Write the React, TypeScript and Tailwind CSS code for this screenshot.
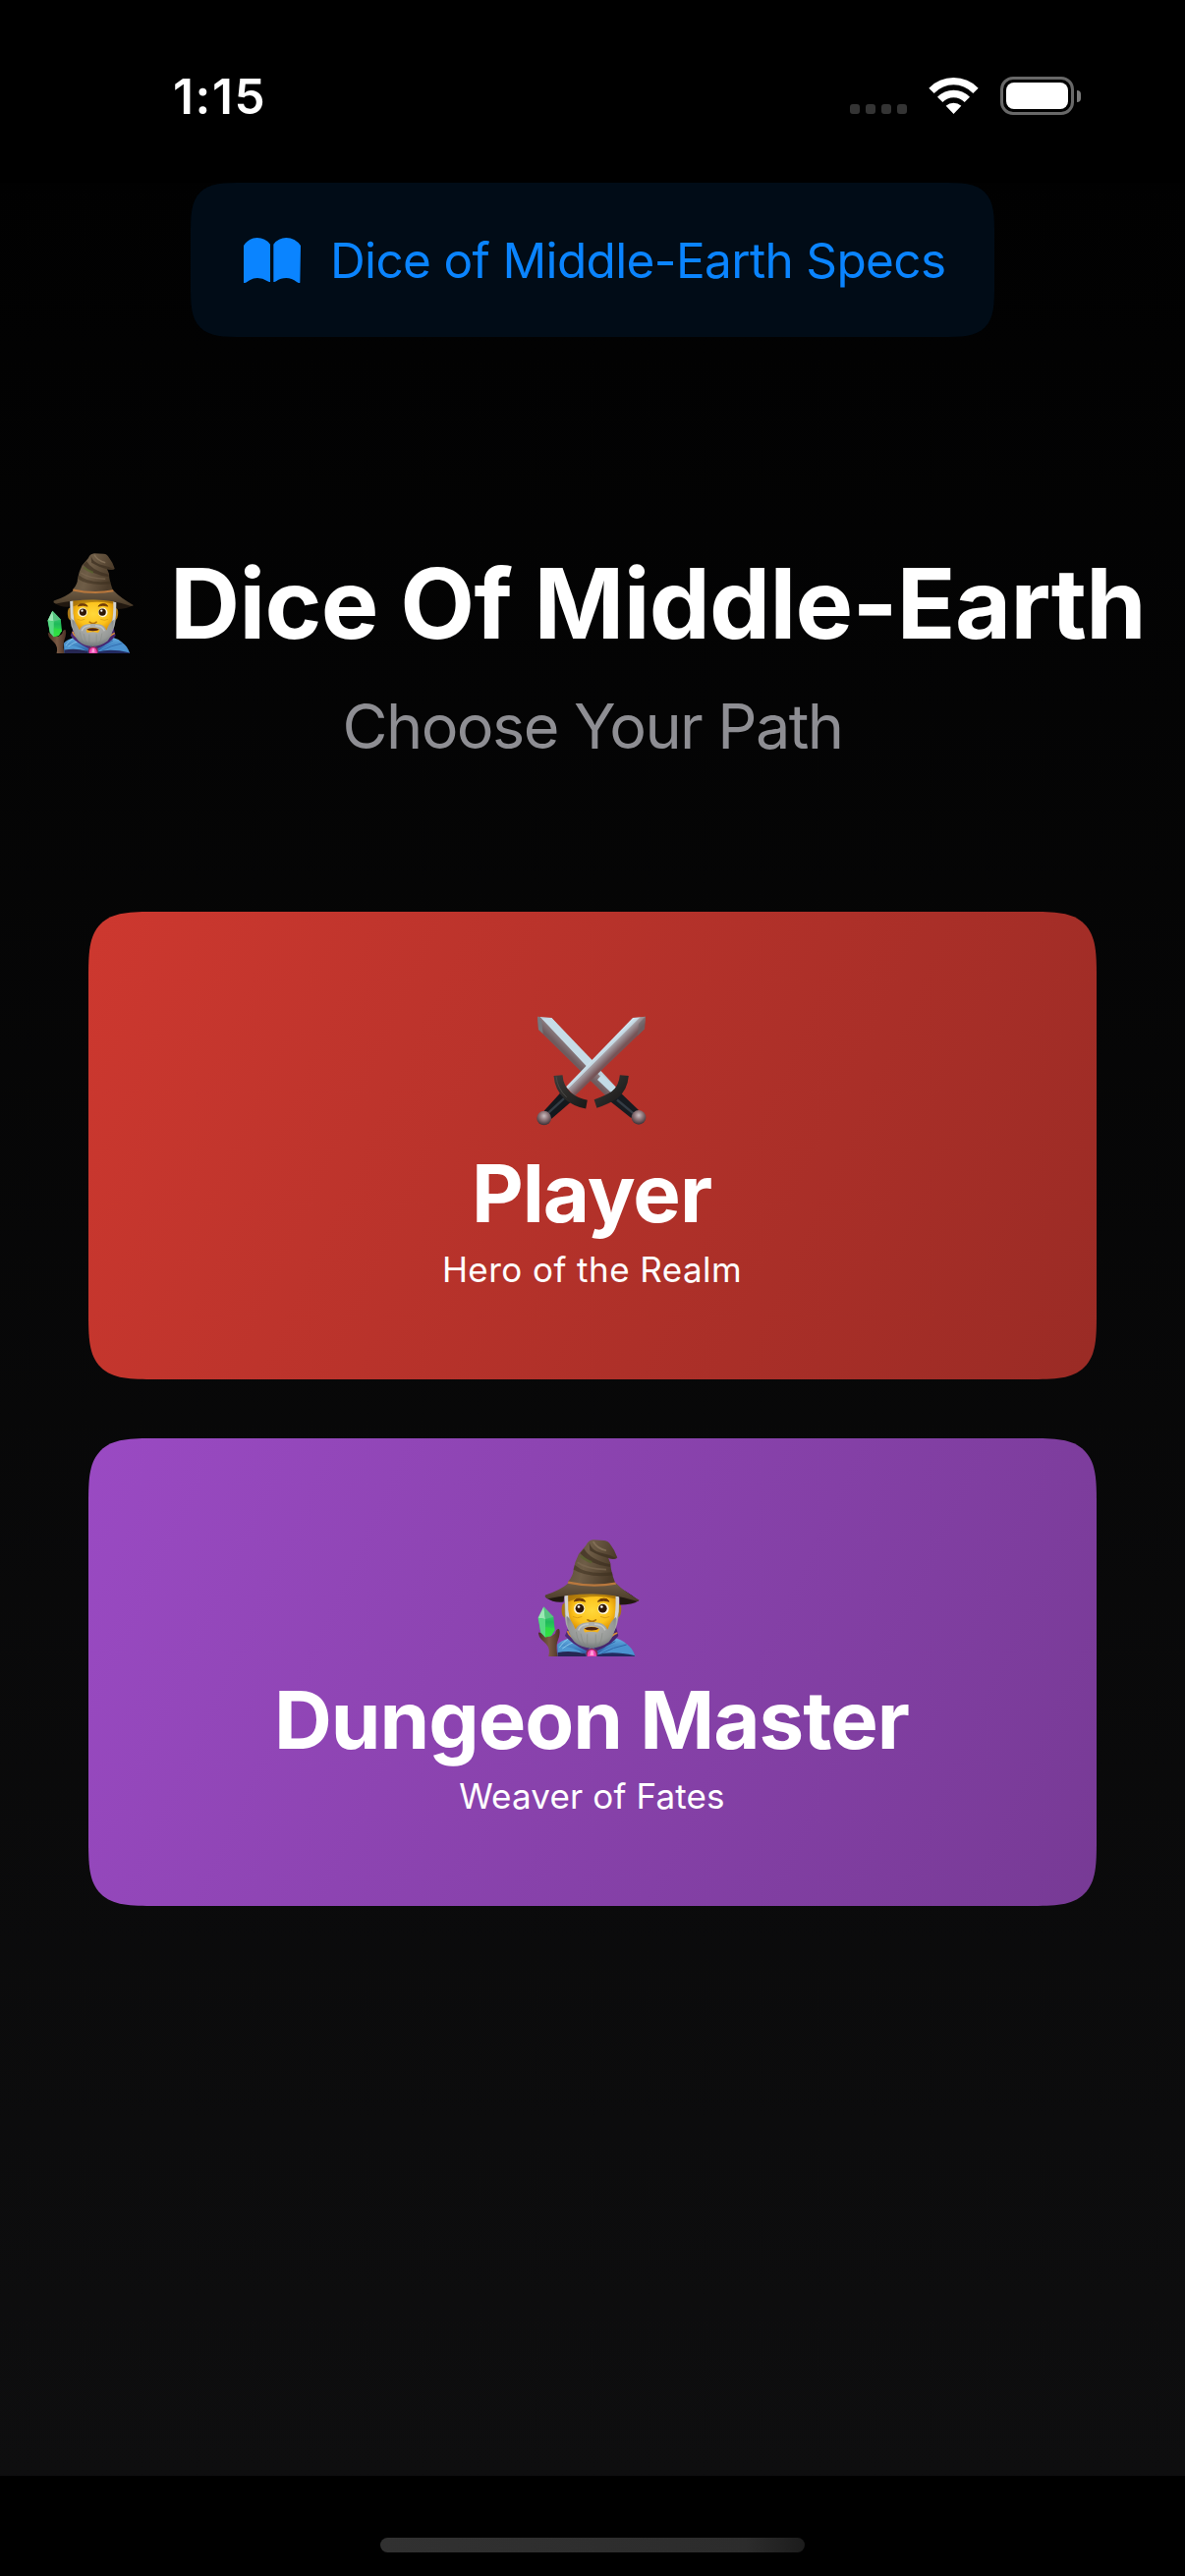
import React, { useId } from "react";

function Wizard({ className }: { className: string }) {
  const id = useId().replace(/[^a-zA-Z0-9]/g, "");
  const u = (n: string) => `url(#${id}${n})`;
  return (
    <svg className={className} viewBox="80 50 312 358" preserveAspectRatio="none" aria-hidden="true">
      <defs>
        <linearGradient id={`${id}hat`} x1="0" y1="0" x2="1" y2="0.3">
          <stop offset="0" stopColor="#5b4c37" />
          <stop offset="0.45" stopColor="#6f5d47" />
          <stop offset="1" stopColor="#4b3b29" />
        </linearGradient>
        <linearGradient id={`${id}brim`} x1="0" y1="0" x2="0" y2="1">
          <stop offset="0" stopColor="#6d5b44" />
          <stop offset="1" stopColor="#493a28" />
        </linearGradient>
        <radialGradient id={`${id}face`} cx="0.5" cy="0.45" r="0.6">
          <stop offset="0" stopColor="#ffd83a" />
          <stop offset="0.65" stopColor="#fcc21b" />
          <stop offset="1" stopColor="#d98f06" />
        </radialGradient>
        <radialGradient id={`${id}beard`} cx="0.5" cy="0.35" r="0.65">
          <stop offset="0" stopColor="#b4b5b3" />
          <stop offset="0.7" stopColor="#969997" />
          <stop offset="1" stopColor="#6f7679" />
        </radialGradient>
        <linearGradient id={`${id}cape`} x1="0" y1="0" x2="0" y2="1">
          <stop offset="0" stopColor="#69b3e6" />
          <stop offset="0.6" stopColor="#3c7dbd" />
          <stop offset="1" stopColor="#24458f" />
        </linearGradient>
        <linearGradient id={`${id}stick`} x1="0" y1="0" x2="1" y2="0">
          <stop offset="0" stopColor="#4a3023" />
          <stop offset="0.5" stopColor="#7a5a44" />
          <stop offset="1" stopColor="#4b3125" />
        </linearGradient>
        <linearGradient id={`${id}gem`} x1="0" y1="0" x2="0" y2="1">
          <stop offset="0" stopColor="#5fe08a" />
          <stop offset="0.5" stopColor="#1fb95a" />
          <stop offset="1" stopColor="#3dea4c" />
        </linearGradient>
      </defs>
      {/* robe */}
      <path d="M142 408 L140 372 Q150 360 176 352 L245 385 L314 350 Q360 362 378 408Z" fill={u("cape")} />
      <path d="M142 376 Q185 376 222 400 L228 408 L142 408Z" fill="#4f98d2" />
      <path d="M142 396 Q180 388 226 400 L228 408 L142 408Z" fill="#262753" />
      <path d="M350 370 Q300 375 264 400 L262 408 L378 408 Q370 380 350 370Z" fill="#4b92d0" />
      <path d="M264 402 Q310 390 376 405 L377 408 L262 408Z" fill="#232a60" />
      <path d="M318 362 Q290 372 266 394 M352 372 Q310 380 276 398" fill="none" stroke="#2e65a8" strokeWidth="3" />
      <path d="M176 352 Q160 362 147 380 M196 364 Q180 366 156 384" fill="none" stroke="#8cc8ec" strokeWidth="3" />
      {/* collar */}
      <path d="M175 318 L164 345 Q186 372 232 392 L245 372Z" fill="#4c2a78" />
      <path d="M320 318 L327 345 Q308 372 260 392 L245 372Z" fill="#452570" />
      <path d="M172 330 Q174 342 190 352" fill="none" stroke="#dc8f35" strokeWidth="5" />
      <path d="M324 336 Q316 338 306 347" fill="none" stroke="#dc8f35" strokeWidth="5" />
      {/* hair, ears, face */}
      <path d="M157 248 Q151 262 156 282 Q160 292 170 290 V240Z M333 248 Q339 262 333 282 Q329 292 320 290 V240Z" fill="#a87614" />
      <path d="M162 215 H330 L327 290 Q322 330 300 350 H195 Q166 328 164 290Z" fill="#a6a9a8" />
      <path d="M163 218 L172 216 L177 300 Q170 290 166 280Z M330 220 L318 218 L315 300 Q324 292 328 270Z" fill="#d3d5d3" />
      <path d="M174 216 H318 Q321 270 312 300 L292 330 H200 Q178 305 174 265Z" fill={u("face")} />
      <path d="M174 216 H318 V231 Q245 215 174 240Z" fill="#8e6008" opacity="0.6" />
      {/* eyes and brows */}
      <circle cx="208" cy="262" r="17" fill="#fff7d8" />
      <circle cx="281" cy="262" r="17" fill="#fff7d8" />
      <circle cx="209" cy="261" r="13" fill="#2e1606" />
      <circle cx="279" cy="261" r="13" fill="#2e1606" />
      <circle cx="206" cy="256" r="4" fill="#fff" />
      <circle cx="276" cy="256" r="4" fill="#fff" />
      <path d="M191 239 Q198 229 209 231 Q222 230 226 240 Q210 234 191 239Z M264 240 Q270 230 283 231 Q294 230 299 240 Q282 234 264 240Z" fill="#6d3a08" stroke="#6d3a08" strokeWidth="3" />
      <path d="M188 286 Q202 294 216 286 M272 286 Q288 294 300 286" fill="none" stroke="#dea013" strokeWidth="3" />
      <path d="M233 296 Q246 306 258 296" fill="none" stroke="#b3730b" strokeWidth="5" strokeLinecap="round" />
      {/* beard */}
      <path d="M170 285 Q184 296 196 326 Q204 306 228 304 Q246 301 264 304 Q286 306 294 326 Q304 298 320 288 Q320 340 298 364 Q274 382 245 383 Q212 382 193 364 Q170 340 170 285Z" fill={u("beard")} />
      <path d="M221 326 Q226 316 245 316 Q264 316 270 326 L264 334 Q245 330 224 334Z" fill="#f3b31b" />
      <path d="M223 322 Q244 313 267 322 Q263 328 245 328 Q228 328 223 322Z" fill="#4b2214" />
      <path d="M205 328 Q210 310 236 309 M287 328 Q280 310 254 309" fill="none" stroke="#c4c6c2" strokeWidth="5" />
      <path d="M212 338 Q214 362 228 378 M232 340 V380 M258 340 V380 M278 336 Q276 364 264 378 M198 332 Q200 352 210 368" fill="none" stroke="#80877f" strokeWidth="2" opacity="0.8" />
      {/* brooch */}
      <ellipse cx="246" cy="399" rx="18" ry="16" fill="#8b2750" />
      <path d="M232 408 Q231 388 246 387 Q260 388 260 408Z" fill="#ef45b0" />
      <path d="M240 405 L243 391 L250 391 L252 405Z" fill="#ff9ad8" />
      {/* hat */}
      <path d="M107 229 Q130 245 160 241 L162 218 Q245 196 330 226 L331 250 Q370 250 389 237 Q350 205 310 190 H176 Q140 210 107 229Z" fill="#211810" />
      <path d="M104 220 Q150 205 175 183 Q250 200 320 184 Q345 210 391 236 Q388 242 372 236 Q320 218 250 217 Q180 216 112 231 Q100 228 104 220Z" fill={u("brim")} />
      <path d="M174 178 Q190 160 190 140 Q194 118 206 94 L228 68 Q236 52 250 51 L284 53 Q296 54 303 66 Q316 82 324 106 Q312 114 296 106 L303 123 Q304 150 318 184 Q250 202 174 184Z" fill={u("hat")} />
      <path d="M238 60 Q246 84 270 90 Q300 96 322 108 Q306 112 292 106 Q268 100 240 84Z" fill="#3d3022" opacity="0.75" />
      <path d="M222 78 Q240 112 302 126 L302 134 Q240 128 210 92Z" fill="#3b2d1e" opacity="0.65" />
      <path d="M194 128 Q230 160 308 150 L310 160 Q230 168 190 142Z" fill="#3b2d1e" opacity="0.55" />
      <path d="M250 56 Q262 78 290 84" fill="none" stroke="#8a765d" strokeWidth="5" opacity="0.8" />
      <path d="M212 100 Q224 112 246 120" fill="none" stroke="#56642b" strokeWidth="8" opacity="0.7" />
      <path d="M202 120 Q228 140 290 142" fill="none" stroke="#7e6a52" strokeWidth="5" opacity="0.7" />
      <path d="M174 178 Q246 194 318 181 L320 188 Q246 201 172 185Z" fill="#b9783d" />
      {/* staff and crystal */}
      <path d="M83 338 Q82 332 90 336 L104 348 H120 L134 338 Q137 322 146 324 Q150 332 146 348 L140 366 Q136 384 142 408 H114 Q120 384 106 370 L92 356 Q84 348 83 338Z" fill={u("stick")} />
      <path d="M99 256 L129 287 L133 328 L122 345 L104 349 L90 334 L82 290Z" fill={u("gem")} />
      <path d="M99 256 L82 290 L104 294Z" fill="#9be8b4" />
      <path d="M99 256 L104 294 L129 287Z" fill="#57c481" />
      <path d="M82 290 L104 294 L104 349 L90 334Z" fill="#56d983" />
      <path d="M104 318 L133 322 L122 345 L104 349Z" fill="#2fe03f" opacity="0.7" />
    </svg>
  );
}

function Swords({ className }: { className: string }) {
  return (
    <svg className={className} viewBox="78 72 336 338" preserveAspectRatio="none" aria-hidden="true">
      <defs>
        <linearGradient id="bladeBack" gradientUnits="userSpaceOnUse" x1="215" y1="165" x2="180" y2="200">
          <stop offset="0" stopColor="#c4d6df" />
          <stop offset="0.5" stopColor="#b5cbd6" />
          <stop offset="0.52" stopColor="#8b7c80" />
          <stop offset="1" stopColor="#6f5a5d" />
        </linearGradient>
        <linearGradient id="bladeFront" gradientUnits="userSpaceOnUse" x1="256" y1="175" x2="294" y2="213">
          <stop offset="0" stopColor="#b9cfda" />
          <stop offset="0.25" stopColor="#d3e8f3" />
          <stop offset="0.5" stopColor="#c2d5df" />
          <stop offset="0.54" stopColor="#a5a0a6" />
          <stop offset="1" stopColor="#765457" />
        </linearGradient>
        <linearGradient id="guard" x1="0" y1="0" x2="1" y2="1">
          <stop offset="0" stopColor="#3a3937" />
          <stop offset="1" stopColor="#1b1a19" />
        </linearGradient>
        <radialGradient id="pommel" cx="0.5" cy="0.35" r="0.6">
          <stop offset="0" stopColor="#c8bcbf" />
          <stop offset="0.5" stopColor="#8d7478" />
          <stop offset="1" stopColor="#45383d" />
        </radialGradient>
      </defs>
      <path d="M81 74 L124 78 L322 292 L294 322 L84 114Z" fill="url(#bladeBack)" />
      <path d="M81 74 L84 114 L98 127 L94 90Z" fill="#76797f" />
      <path d="M94 80 L124 78 L250 210 L232 228Z" fill="#c6dce7" />
      <path d="M277 252 L320 292 L306 308 L264 268Z" fill="#c3dbe6" />
      <path d="M336 310 L390 362 L367 386 L304 335Z" fill="#171b20" />
      <path d="M324 330 L374 372" stroke="#343c44" strokeWidth="7" />
      <path d="M346 255 Q343 294 316 315 Q292 331 258 342" fill="none" stroke="url(#guard)" strokeWidth="27" />
      <circle cx="390" cy="384" r="22" fill="url(#pommel)" />
      <path d="M411 74 L372 78 L168 290 L194 319 L408 112Z" fill="url(#bladeFront)" />
      <path d="M411 74 L408 112 L386 134 L390 96Z" fill="#6b6468" opacity="0.6" />
      <path d="M188 332 L124 388 L101 364 L150 310Z" fill="#14181d" />
      <path d="M162 326 L112 372" stroke="#343c44" strokeWidth="7" />
      <path d="M144 255 Q147 294 174 318 Q198 338 231 344" fill="none" stroke="url(#guard)" strokeWidth="27" />
      <path d="M138 258 Q142 296 170 322" fill="none" stroke="#4a4947" strokeWidth="3" />
      <circle cx="101" cy="386" r="22" fill="url(#pommel)" />
    </svg>
  );
}

function StatusBar() {
  return (
    <header className="flex h-[186px] items-start justify-between bg-black pr-[106px] pl-[176px] pt-[68px] text-white">
      <time className="text-[49.5px] leading-[60px] font-semibold tracking-[1.6px]">1:15</time>
      <div className="flex items-start pt-[10px]">
        <div className="mt-[28px] flex gap-[6px]">
          <i className="size-[10px] rounded-[3px] bg-[#343434]" />
          <i className="size-[10px] rounded-[3px] bg-[#343434]" />
          <i className="size-[10px] rounded-[3px] bg-[#343434]" />
          <i className="size-[10px] rounded-[3px] bg-[#343434]" />
        </div>
        <svg className="mt-[1px] ml-[22px] h-[37px] w-[51px]" viewBox="315 57 153 111" fill="#fff" aria-hidden="true">
          <path d="M316 89 Q347 57 391.500 57 Q436 57 467 89 L451 105 Q425 79 391.500 79 Q358 79 332 105Z" />
          <path d="M342 116 Q363 95 391.500 95 Q420 95 441 116 L425 132 Q411 118 391.500 118 Q372 118 358 132Z" />
          <path d="M368 143 Q378 134 391.500 134 Q405 134 415 143 L391.500 168Z" />
        </svg>
        <div className="ml-[22px] flex items-center">
          <div className="h-[39px] w-[75px] rounded-[13px] border-[3px] border-[#686868] p-[3px]">
            <div className="h-full w-full rounded-[8px] bg-white" />
          </div>
          <div className="ml-[3px] h-[12px] w-[4px] rounded-r-full bg-[#7a7a7a]" />
        </div>
      </div>
    </header>
  );
}

type RoleCardProps = {
  art: React.ReactNode;
  title: string;
  subtitle: string;
  gradient: string;
  subtitleTracking: string;
};

function RoleCard({ art, title, subtitle, gradient, subtitleTracking }: RoleCardProps) {
  return (
    <button
      className={`flex h-[476px] w-[1026px] flex-col items-center rounded-[69px] pt-[98px] text-white [corner-shape:superellipse(1.8)] ${gradient}`}
    >
      <div className="flex h-[130px] w-full justify-center">{art}</div>
      <h2 className="mt-[11px] mr-[2px] text-[81.5px] leading-[96px] font-bold tracking-[-1px]">{title}</h2>
      <p className={`mt-[8px] mr-[1px] text-[35px] leading-[42px] ${subtitleTracking}`}>{subtitle}</p>
    </button>
  );
}

export default function App() {
  return (
    <div className="flex h-[2622px] w-[1206px] flex-col overflow-hidden bg-black font-['Inter',sans-serif]">
      <StatusBar />
      <main className="flex h-[2334px] flex-col items-center bg-[linear-gradient(to_bottom,#000_-186px,#0e0e0f_100%)]">
        <button className="flex h-[157px] w-[818px] items-center rounded-[54px] bg-[#010c17] pl-[54px] text-[#0a84ff] [corner-shape:superellipse(1.8)]">
          <svg className="h-[46px] w-[58px] shrink-0" viewBox="204 216 174 138" fill="#0a84ff" aria-hidden="true">
            <path d="M204 240 Q220 216 245 216 Q270 216 285 236 V351 Q281 352 277 349 Q262 339 246 339 Q229 339 214 351 Q208 355 204 353Z" />
            <path d="M378 240 Q361 216 334 216 Q310 216 295 236 V351 Q299 352 303 349 Q317 339 334 339 Q351 339 366 351 Q372 355 376 353Z" />
          </svg>
          <span className="ml-[30px] text-[49.5px] leading-[60px] tracking-[-0.65px] whitespace-nowrap">
            Dice of Middle-Earth Specs
          </span>
        </button>
        <h1 className="mt-[212px] flex w-full items-start pl-[48px] text-[98.5px] leading-[120px] font-bold tracking-[-0.7px] whitespace-nowrap text-white">
          <Wizard className="mt-[8px] h-[102px] w-[88px]" />
          <span className="ml-[37px]">Dice Of Middle-Earth</span>
        </h1>
        <p className="mt-[24px] text-[63px] leading-[80px] tracking-[-1.6px] text-[#8e8e93]">Choose Your Path</p>
        <div className="mt-[149px] flex flex-col gap-[60px]">
          <RoleCard
            art={<Swords className="mt-[8px] mr-[2px] h-[112px] w-[112px]" />}
            title="Player"
            subtitle="Hero of the Realm"
            gradient="bg-[linear-gradient(114.9deg,#cd382f,#9a2b25)]"
            subtitleTracking="tracking-[0.45px]"
          />
          <RoleCard
            art={<Wizard className="mt-[5px] mr-[9px] h-[119px] w-[104px]" />}
            title="Dungeon Master"
            subtitle="Weaver of Fates"
            gradient="bg-[linear-gradient(114.9deg,#9a4ac3,#773a95)]"
            subtitleTracking="tracking-[0.15px]"
          />
        </div>
      </main>
      <footer className="flex h-[102px] justify-center bg-black pt-[63px]">
        <div className="h-[15px] w-[432px] rounded-full bg-[linear-gradient(to_right,#313131_0%,#2c2c2c_86%,#1c1c1c_100%)]" />
      </footer>
    </div>
  );
}
